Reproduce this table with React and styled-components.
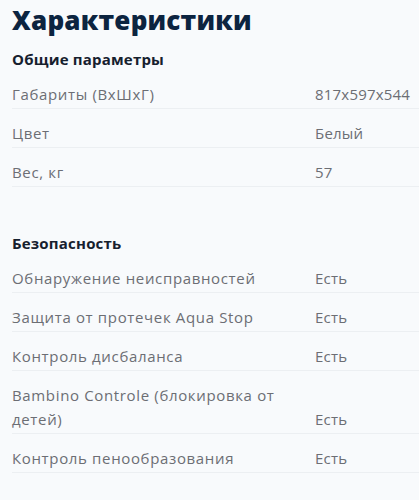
import React from "react";
import styled, { createGlobalStyle } from "styled-components";

const FONT = `"Open Sans", "Noto Sans", Arial, sans-serif`;

const GlobalStyle = createGlobalStyle`
  html, body { margin: 0; padding: 0; background: #f8fafc; }
  body { font-family: ${FONT}; -webkit-font-smoothing: antialiased; }
`;

const Page = styled.div`
  padding: 2px 0 20px 12px;
  background: #f8fafc;
`;

const Title = styled.h1`
  margin: 0;
  font-size: 26px;
  line-height: 36px;
  font-weight: 800;
  color: #0c2440;
  letter-spacing: 0.2px;
`;

const Section = styled.section`
  margin-top: ${(p) => p.$gap}px;
`;

const SectionTitle = styled.h2`
  margin: 0;
  font-size: 15px;
  line-height: 22px;
  font-weight: 700;
  color: #16202e;
  letter-spacing: 0.2px;
`;

const Row = styled.div`
  display: grid;
  grid-template-columns: 303px 1fr;
  align-items: end;
  padding: 12px 0 2px;
  border-bottom: 1px solid #eceff2;
  font-size: 15px;
  line-height: 24px;
  color: #6c6e74;
  letter-spacing: 0.65px;
`;

const Label = styled.span``;
const Value = styled.span`
  letter-spacing: 0.2px;
`;

const general = [
  ["Габариты (ВхШхГ)", "817x597x544"],
  ["Цвет", "Белый"],
  ["Вес, кг", "57"],
];

const safety = [
  ["Обнаружение неисправностей", "Есть"],
  ["Защита от протечек Aqua Stop", "Есть"],
  ["Контроль дисбаланса", "Есть"],
  [
    <>
      Bambino Controle (блокировка от
      <br />
      детей)
    </>,
    "Есть",
  ],
  ["Контроль пенообразования", "Есть"],
];

export default function App() {
  return (
    <>
      <GlobalStyle />
      <Page>
        <Title>Характеристики</Title>
        <Section $gap={10}>
          <SectionTitle>Общие параметры</SectionTitle>
          {general.map(([l, v], i) => (
            <Row key={i}>
              <Label>{l}</Label>
              <Value>{v}</Value>
            </Row>
          ))}
        </Section>
        <Section $gap={45}>
          <SectionTitle>Безопасность</SectionTitle>
          {safety.map(([l, v], i) => (
            <Row key={i}>
              <Label>{l}</Label>
              <Value>{v}</Value>
            </Row>
          ))}
        </Section>
      </Page>
    </>
  );
}
